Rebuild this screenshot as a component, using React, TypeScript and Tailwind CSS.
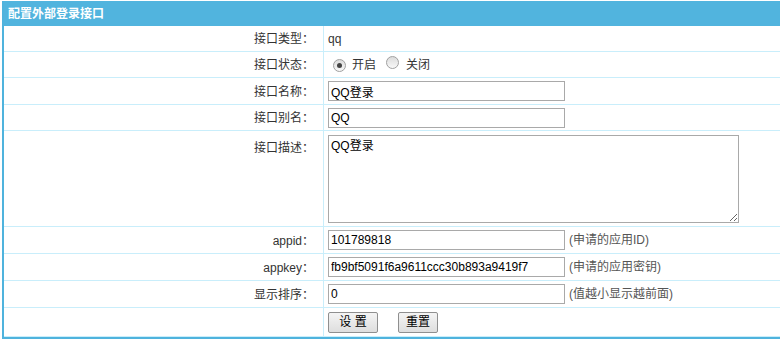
import React from "react";

const font = { fontFamily: '"Liberation Sans", Arial, "Noto Sans CJK SC", sans-serif' };

function Row({ label, children, h = "h-[27px]", top = false }: { label: string; children?: React.ReactNode; h?: string; top?: boolean }) {
  return (
    <div className={`grid grid-cols-[320px_1fr] border-b border-[#c9eefb] ${h}`}>
      <div className={`flex justify-end pr-[9px] text-[12px] text-[#333] border-r border-[#c9eefb] ${top ? "items-start pt-[8px]" : "items-center pt-[1px]"}`}>
        {label}
      </div>
      <div className={`flex pl-[4px] text-[12px] text-[#333] ${top ? "items-start pt-[4px]" : "items-center"}`}>{children}</div>
    </div>
  );
}

function Radio({ checked }: { checked?: boolean }) {
  return (
    <span className="inline-flex w-[13px] h-[13px] rounded-full border border-[#a0a0a0] bg-gradient-to-b from-[#dcdcdc] to-[#f8f8f8] items-center justify-center">
      {checked && <span className="w-[5px] h-[5px] rounded-full bg-[#444]" />}
    </span>
  );
}

function TextInput({ value }: { value: string }) {
  return (
    <input
      readOnly
      defaultValue={value}
      className="w-[237px] h-[20px] border border-[#a9a9a9] px-[2px] text-[12px] text-black outline-none bg-white"
      style={font}
    />
  );
}

export default function App() {
  return (
    <div className="w-[780px] h-[352px] bg-white" style={font}>
      <div className="ml-[2px] mt-[1px] border-l-2 border-b-2 border-[#4fb3dd]">
        <div className="h-[25px] bg-[#51b4de] flex items-center pl-[4px] text-white font-bold text-[12px]">
          配置外部登录接口
        </div>
        <Row label="接口类型：" h="h-[26px]">
          <span>qq</span>
        </Row>
        <Row label="接口状态：" h="h-[26px]">
          <span className="flex items-center pl-[5px] pt-[1px]">
            <Radio checked />
            <span className="ml-[6px]">开启</span>
            <span className="ml-[10px]"><Radio /></span>
            <span className="ml-[7px]">关闭</span>
          </span>
        </Row>
        <Row label="接口名称：">
          <TextInput value="QQ登录" />
        </Row>
        <Row label="接口别名：" h="h-[26px]">
          <TextInput value="QQ" />
        </Row>
        <Row label="接口描述：" h="h-[96px]" top>
          <textarea
            readOnly
            defaultValue="QQ登录"
            className="w-[411px] h-[88px] border border-[#a9a9a9] px-[2px] py-[1px] text-[12px] text-black outline-none bg-white"
            style={font}
          />
        </Row>
        <Row label="appid：">
          <TextInput value="101789818" />
          <span className="ml-[4px] text-[#555]">(申请的应用ID)</span>
        </Row>
        <Row label="appkey：">
          <TextInput value="fb9bf5091f6a9611ccc30b893a9419f7" />
          <span className="ml-[4px] text-[#555]">(申请的应用密钥)</span>
        </Row>
        <Row label="显示排序：">
          <TextInput value="0" />
          <span className="ml-[4px] text-[#555]">(值越小显示越前面)</span>
        </Row>
        <Row label="" h="h-[29px]">
          <button className="w-[50px] h-[21px] border border-[#8f8f8f] bg-gradient-to-b from-[#f4f4f4] to-[#dedede] text-[12px] text-black rounded-[2px]">
            设 置
          </button>
          <button className="ml-[20px] w-[40px] h-[21px] border border-[#8f8f8f] bg-gradient-to-b from-[#f4f4f4] to-[#dedede] text-[12px] text-black rounded-[2px]">
            重置
          </button>
        </Row>
      </div>
    </div>
  );
}
